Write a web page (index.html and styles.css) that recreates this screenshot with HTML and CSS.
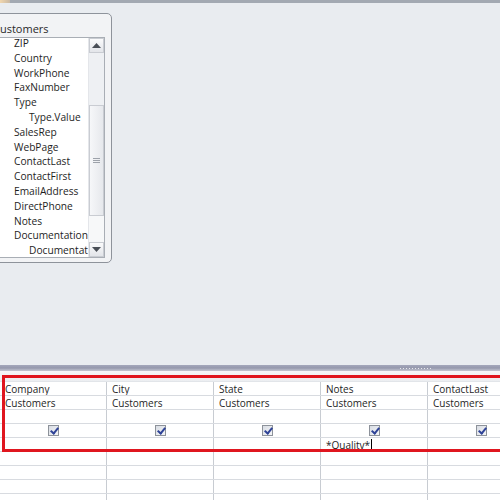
FILE: index.html
```html
<!DOCTYPE html>
<html>
<head>
<meta charset="utf-8">
<link rel="stylesheet" href="styles.css">
</head>
<body>
<div class="screen">
  <div class="topbar"><span class="tab-edge"></span></div>
  <div class="canvas">
    <div class="fieldlist">
      <div class="fl-title">Customers</div>
      <div class="fl-box">
        <ul class="fl-items">
          <li>ZIP</li>
          <li>Country</li>
          <li>WorkPhone</li>
          <li>FaxNumber</li>
          <li>Type</li>
          <li class="sub">Type.Value</li>
          <li>SalesRep</li>
          <li>WebPage</li>
          <li>ContactLast</li>
          <li>ContactFirst</li>
          <li>EmailAddress</li>
          <li>DirectPhone</li>
          <li>Notes</li>
          <li>Documentation</li>
          <li class="sub">Documentat</li>
        </ul>
        <div class="vscroll">
          <div class="sb-btn"><svg width="9" height="5" viewBox="0 0 9 5"><path d="M0 5 L4.5 0 L9 5 Z" fill="#4a4f57"/></svg></div>
          <div class="sb-track upper"></div>
          <div class="sb-thumb"><span class="grip"></span></div>
          <div class="sb-track"></div>
          <div class="sb-btn"><svg width="9" height="5" viewBox="0 0 9 5"><path d="M0 0 L9 0 L4.5 5 Z" fill="#4a4f57"/></svg></div>
        </div>
      </div>
    </div>
  </div>
  <div class="splitter"><span class="dots"></span></div>
  <div class="gridpane">
    <div class="band"></div>
    <div class="grow">
      <div class="cell">Company</div><div class="cell">City</div><div class="cell">State</div><div class="cell">Notes</div><div class="cell">ContactLast</div>
    </div>
    <div class="grow">
      <div class="cell">Customers</div><div class="cell">Customers</div><div class="cell">Customers</div><div class="cell">Customers</div><div class="cell">Customers</div>
    </div>
    <div class="grow">
      <div class="cell"></div><div class="cell"></div><div class="cell"></div><div class="cell"></div><div class="cell"></div>
    </div>
    <div class="grow">
      <div class="cell center"><span class="chk"></span></div><div class="cell center"><span class="chk"></span></div><div class="cell center"><span class="chk"></span></div><div class="cell center"><span class="chk"></span></div><div class="cell center"><span class="chk"></span></div>
    </div>
    <div class="grow">
      <div class="cell"></div><div class="cell"></div><div class="cell"></div><div class="cell">*Quality*<span class="caret"></span></div><div class="cell"></div>
    </div>
    <div class="grow">
      <div class="cell"></div><div class="cell"></div><div class="cell"></div><div class="cell"></div><div class="cell"></div>
    </div>
    <div class="grow">
      <div class="cell"></div><div class="cell"></div><div class="cell"></div><div class="cell"></div><div class="cell"></div>
    </div>
    <div class="grow">
      <div class="cell"></div><div class="cell"></div><div class="cell"></div><div class="cell"></div><div class="cell"></div>
    </div>
    <div class="grow">
      <div class="cell"></div><div class="cell"></div><div class="cell"></div><div class="cell"></div><div class="cell"></div>
    </div>
    <div class="highlight"></div>
  </div>
</div>
</body>
</html>
```

FILE: styles.css
```css
html, body {
  margin: 0;
  padding: 0;
}
body {
  width: 500px;
  height: 500px;
  overflow: hidden;
  background: #e9ecf0;
  font-family: "Open Sans", "Noto Sans", sans-serif;
  color: #1e1e1e;
}
.screen {
  width: 500px;
  height: 500px;
  display: flex;
  flex-direction: column;
  overflow: hidden;
}
.topbar {
  height: 3px;
  flex: none;
  background: #a3a9b2;
  display: flex;
}
.tab-edge {
  width: 10px;
  height: 3px;
  background: linear-gradient(to right, #f1d6ad, #c9b9a5);
}
.canvas {
  height: 362px;
  flex: none;
  position: relative;
  background: #e9ecf0;
}
.fieldlist {
  position: absolute;
  left: -12px;
  top: 10px;
  width: 124px;
  height: 250px;
  box-sizing: border-box;
  border: 1px solid #8e939b;
  border-radius: 5px;
  background: #f2f3f5;
  display: flex;
  flex-direction: column;
}
.fl-title {
  font-size: 11px;
  line-height: 14px;
  padding: 8px 0 0 4px;
  height: 14px;
  color: #2a2a2a;
}
.fl-box {
  margin: 1px 6px 0 6px;
  height: 219px;
  border: 1px solid #a9aeb5;
  background: #fff;
  display: flex;
  flex: none;
  overflow: hidden;
}
.fl-items {
  list-style: none;
  margin: -2px 0 0 0;
  padding: 0 0 0 18px;
  flex: 1;
  overflow: hidden;
  font-size: 10.2px;
  line-height: 14.8px;
  white-space: nowrap;
}
.fl-items li.sub {
  padding-left: 15px;
}
.vscroll {
  width: 15px;
  flex: none;
  display: flex;
  flex-direction: column;
  background: #f3f4f6;
  border-left: 1px solid #e4e6ea;
}
.sb-btn {
  height: 15px;
  flex: none;
  box-sizing: border-box;
  border: 1px solid #c9ccd2;
  background: linear-gradient(to bottom, #fbfbfc, #e3e5e9);
  display: flex;
  align-items: center;
  justify-content: center;
}
.sb-thumb {
  height: 111px;
  flex: none;
  box-sizing: border-box;
  border: 1px solid #c9ccd2;
  background: linear-gradient(to right, #f6f7f9, #e6e8ec);
  display: flex;
  align-items: center;
  justify-content: center;
}
.grip {
  width: 7px;
  height: 5px;
  background: repeating-linear-gradient(to bottom, #9da2aa 0 1px, transparent 1px 2px);
}
.sb-track {
  flex: 1;
  background: #f7f8f9;
}
.sb-track.upper {
  flex: none;
  height: 52px;
  background: #eef0f3;
}
.splitter {
  height: 6px;
  flex: none;
  background: linear-gradient(to bottom, #a4a7bb, #9598ad 50%, #c7c9d4);
  display: flex;
  align-items: center;
  padding-left: 400px;
}
.dots {
  width: 33px;
  height: 1px;
  background: repeating-linear-gradient(to right, #e8e9ee 0 1px, transparent 1px 3px);
}
.gridpane {
  flex: 1;
  position: relative;
  background: #ffffff;
  overflow: hidden;
}
.band {
  height: 11px;
  background: linear-gradient(to bottom, #f7f8fa, #eceef1);
  border-bottom: 1px solid #e2e5e9;
  box-sizing: border-box;
}
.grow {
  display: flex;
  height: 14px;
  box-sizing: border-box;
  border-bottom: 1px solid #d8dbe0;
}
.cell {
  width: 107px;
  flex: none;
  box-sizing: border-box;
  border-right: 1px solid #c8ccd2;
  font-size: 10px;
  line-height: 13px;
  padding-left: 5px;
  padding-top: 1px;
  white-space: nowrap;
  overflow: hidden;
  display: flex;
  align-items: center;
}
.cell.center {
  justify-content: center;
  padding-left: 0;
  padding-top: 0;
}
.chk {
  width: 11px;
  height: 11px;
  box-sizing: border-box;
  border: 1px solid #8d929a;
  background: linear-gradient(135deg, #d9dde4, #f4f5f7);
  position: relative;
}
.chk::after {
  content: "";
  position: absolute;
  left: 3px;
  top: 0px;
  width: 3px;
  height: 6px;
  border-right: 2px solid #2f4397;
  border-bottom: 2px solid #2f4397;
  transform: rotate(40deg);
}
.caret {
  display: inline-block;
  width: 1px;
  height: 12px;
  background: #000;
  margin-left: 1px;
}
.highlight {
  position: absolute;
  left: 2px;
  top: 4px;
  width: 540px;
  height: 77px;
  box-sizing: border-box;
  border: 3px solid #e0161f;
  pointer-events: none;
}
```
